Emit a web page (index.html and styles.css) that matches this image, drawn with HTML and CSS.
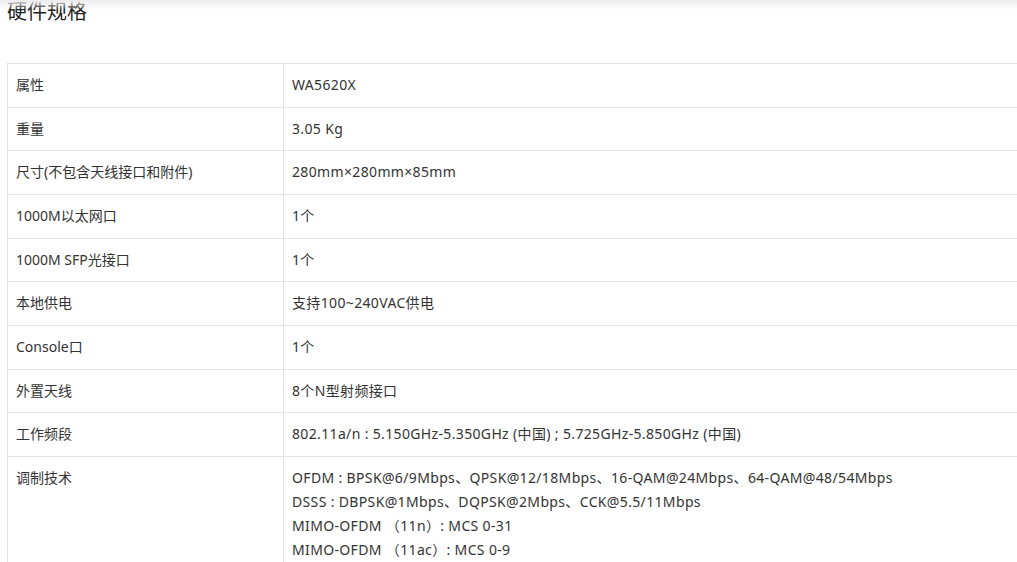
FILE: index.html
```html
<!DOCTYPE html>
<html lang="zh-CN">

<head>
    <meta charset="UTF-8">
    <meta name="viewport" content="width=device-width, initial-scale=1.0">
    <title>硬件规格</title>
    <link rel="stylesheet" href="styles.css">
</head>

<body>
    <div class="top-shadow"></div>
    <div id="container">
        <h2 class="title">硬件规格</h2>
        <table class="spec">
            <tr>
                <td class="key">属性</td>
                <td class="val">WA5620X</td>
            </tr>
            <tr>
                <td class="key">重量</td>
                <td class="val">3.05 Kg</td>
            </tr>
            <tr>
                <td class="key">尺寸(不包含天线接口和附件)</td>
                <td class="val">280mm×280mm×85mm</td>
            </tr>
            <tr>
                <td class="key">1000M以太网口</td>
                <td class="val">1个</td>
            </tr>
            <tr>
                <td class="key">1000M SFP光接口</td>
                <td class="val">1个</td>
            </tr>
            <tr>
                <td class="key">本地供电</td>
                <td class="val">支持100~240VAC供电</td>
            </tr>
            <tr>
                <td class="key">Console口</td>
                <td class="val">1个</td>
            </tr>
            <tr>
                <td class="key">外置天线</td>
                <td class="val">8个N型射频接口</td>
            </tr>
            <tr>
                <td class="key">工作频段</td>
                <td class="val">802.11a/n : 5.150GHz-5.350GHz (中国) ; 5.725GHz-5.850GHz (中国)</td>
            </tr>
            <tr>
                <td class="key">调制技术</td>
                <td class="val">OFDM : BPSK@6/9Mbps、QPSK@12/18Mbps、16-QAM@24Mbps、64-QAM@48/54Mbps<br>
                    DSSS : DBPSK@1Mbps、DQPSK@2Mbps、CCK@5.5/11Mbps<br>
                    MIMO-OFDM （11n）: MCS 0-31<br>
                    MIMO-OFDM （11ac）: MCS 0-9<br>
                    MIMO-OFDM （11ax）: MCS 0-11</td>
            </tr>
        </table>
    </div>
</body>

</html>
```

FILE: styles.css
```css
html,
body {
    margin: 0;
    overflow: hidden;
    background: #fff;
}

body {
    font-family: "Noto Sans", "Noto Sans CJK SC", sans-serif;
    color: #333;
}

.top-shadow {
    position: absolute;
    top: 0;
    left: 0;
    right: 0;
    height: 10px;
    background: linear-gradient(#ececec, rgba(255, 255, 255, 0));
}

#container {
    padding: 0 0 0 7px;
    width: 1120px;
}

.title {
    font-size: 20px;
    font-weight: normal;
    line-height: 24px;
    margin: 0;
    color: #222;
}

.spec {
    margin-top: 39px;
    width: 1100px;
    border-collapse: collapse;
    font-size: 14px;
}

.spec td {
    border: 1px solid #e3e3e3;
    padding: 9px 8px 9.67px 8px;
    line-height: 24px;
    vertical-align: top;
    text-align: left;
}

.spec td.key {
    width: 259px;
}

.spec td.val {
    letter-spacing: 0.35px;
}
```
